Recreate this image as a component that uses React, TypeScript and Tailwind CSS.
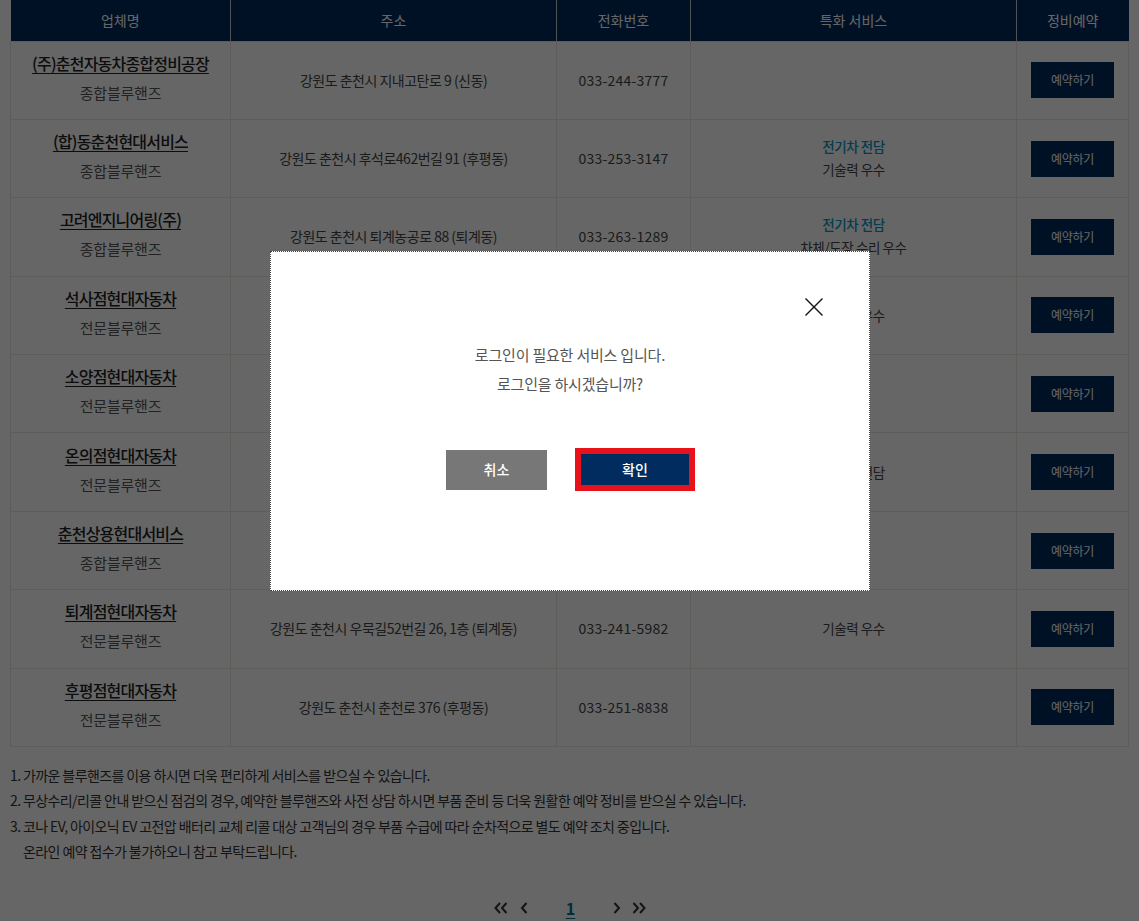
import React from "react";

type Row = {
  name: string;
  kind: string;
  addr: string;
  phone: string;
  ev?: string;
  svc?: string;
};

const rows: Row[] = [
  { name: "(주)춘천자동차종합정비공장", kind: "종합블루핸즈", addr: "강원도 춘천시 지내고탄로 9 (신동)", phone: "033-244-3777" },
  { name: "(합)동춘천현대서비스", kind: "종합블루핸즈", addr: "강원도 춘천시 후석로462번길 91 (후평동)", phone: "033-253-3147", ev: "전기차 전담", svc: "기술력 우수" },
  { name: "고려엔지니어링(주)", kind: "종합블루핸즈", addr: "강원도 춘천시 퇴계농공로 88 (퇴계동)", phone: "033-263-1289", ev: "전기차 전담", svc: "차체/도장 수리 우수" },
  { name: "석사점현대자동차", kind: "전문블루핸즈", addr: "강원도 춘천시 석사동 123", phone: "033-262-0000", svc: "기술력 우수" },
  { name: "소양점현대자동차", kind: "전문블루핸즈", addr: "강원도 춘천시 소양로 45", phone: "033-254-0000" },
  { name: "온의점현대자동차", kind: "전문블루핸즈", addr: "강원도 춘천시 온의동 67", phone: "033-256-0000", svc: "전기차 전담" },
  { name: "춘천상용현대서비스", kind: "종합블루핸즈", addr: "강원도 춘천시 영서로 100", phone: "033-261-0000" },
  { name: "퇴계점현대자동차", kind: "전문블루핸즈", addr: "강원도 춘천시 우묵길52번길 26, 1층 (퇴계동)", phone: "033-241-5982", svc: "기술력 우수" },
  { name: "후평점현대자동차", kind: "전문블루핸즈", addr: "강원도 춘천시 춘천로 376 (후평동)", phone: "033-251-8838" },
];

const font = { fontFamily: '"Noto Sans CJK KR", "Noto Sans", sans-serif' };

export default function App() {
  return (
    <div className="relative min-h-[921px] w-[1139px] bg-white text-[#333]" style={font}>
      <table className="ml-[10px] w-[1118px] table-fixed border-collapse">
        <colgroup>
          <col className="w-[220px]" />
          <col className="w-[326px]" />
          <col className="w-[134px]" />
          <col className="w-[326px]" />
          <col className="w-[112px]" />
        </colgroup>
        <thead>
          <tr className="h-[41px] bg-[#002c5f] text-[14px] text-white">
            <th className="border-r border-[#c9ccd2] font-normal">업체명</th>
            <th className="border-r border-[#c9ccd2] font-normal">주소</th>
            <th className="border-r border-[#c9ccd2] font-normal">전화번호</th>
            <th className="border-r border-[#c9ccd2] font-normal">특화 서비스</th>
            <th className="font-normal">정비예약</th>
          </tr>
        </thead>
        <tbody>
          {rows.map((r, i) => (
            <tr key={i} className="h-[78.4px] text-center">
              <td className="border border-[#ebe9df] pb-[2px] align-middle">
                <div className="-mt-[3px] text-[16px] leading-[22px] font-medium text-[#222] underline underline-offset-[3px] tracking-[-0.8px]">
                  {r.name}
                </div>
                <div className="mt-[8px] text-[15px] leading-[22px] text-[#555] tracking-[-0.2px]">{r.kind}</div>
              </td>
              <td className="border border-[#ebe9df] text-[14px] text-[#444] tracking-[-0.5px]">{r.addr}</td>
              <td className="border border-[#ebe9df] text-[14px] text-[#444] tracking-[0.2px]">{r.phone}</td>
              <td className="border border-[#ebe9df] text-[13.5px] tracking-[-0.4px]">
                {r.ev && <div className="-mt-[2px] leading-[23px] font-medium text-[#0b93c4]">{r.ev}</div>}
                {r.svc && <div className="leading-[23px] text-[#444]">{r.svc}</div>}
              </td>
              <td className="border border-[#ebe9df]">
                <button className="h-[36px] w-[83px] bg-[#002c5f] text-[12px] text-white tracking-[-0.3px]">예약하기</button>
              </td>
            </tr>
          ))}
        </tbody>
      </table>

      <ul className="mt-[16px] ml-[10px] flex flex-col text-[14px] leading-[25.4px] text-[#333] tracking-[-0.6px]">
        <li>1. 가까운 블루핸즈를 이용 하시면 더욱 편리하게 서비스를 받으실 수 있습니다.</li>
        <li>2. 무상수리/리콜 안내 받으신 점검의 경우, 예약한 블루핸즈와 사전 상담 하시면 부품 준비 등 더욱 원활한 예약 정비를 받으실 수 있습니다.</li>
        <li>
          3. 코나 EV, 아이오닉 EV 고전압 배터리 교체 리콜 대상 고객님의 경우 부품 수급에 따라 순차적으로 별도 예약 조치 중입니다.
          <br />
          <span className="pl-[13px]">온라인 예약 접수가 불가하오니 참고 부탁드립니다.</span>
        </li>
      </ul>

      <div className="mt-[33px] flex items-center justify-center gap-0 pl-[1px] text-[#333]">
        <svg width="14" height="12" viewBox="0 0 14 12" className="mr-[12px]" fill="none" stroke="#333" strokeWidth="2">
          <path d="M6 1 L1.5 6 L6 11 M12.5 1 L8 6 L12.5 11" />
        </svg>
        <svg width="8" height="12" viewBox="0 0 8 12" fill="none" stroke="#333" strokeWidth="2">
          <path d="M6.5 1 L2 6 L6.5 11" />
        </svg>
        <span className="mx-[38px] text-[16px] font-bold leading-[20px] text-[#0b6f8f] underline underline-offset-[3px]">1</span>
        <svg width="8" height="12" viewBox="0 0 8 12" fill="none" stroke="#333" strokeWidth="2">
          <path d="M1.5 1 L6 6 L1.5 11" />
        </svg>
        <svg width="14" height="12" viewBox="0 0 14 12" className="ml-[11px]" fill="none" stroke="#333" strokeWidth="2">
          <path d="M1.5 1 L6 6 L1.5 11 M8 1 L12.5 6 L8 11" />
        </svg>
      </div>

      {/* dim overlay */}
      <div className="fixed inset-0 bg-black/60" />

      {/* modal */}
      <div className="fixed left-[270px] top-[251px] h-[340px] w-[600px] bg-white outline-1 outline-dotted outline-[#444] -outline-offset-1">
        <button className="absolute right-[46px] top-[46px] h-[20px] w-[20px]" aria-label="닫기">
          <svg width="20" height="20" viewBox="0 0 20 20" fill="none" stroke="#111" strokeWidth="1.4">
            <path d="M1.5 1.5 L18.5 18.5 M18.5 1.5 L1.5 18.5" />
          </svg>
        </button>
        <div className="flex flex-col items-center pt-[90px] text-[15px] leading-[28.5px] text-[#555] tracking-[-0.2px]">
          <p>로그인이 필요한 서비스 입니다.</p>
          <p>로그인을 하시겠습니까?</p>
        </div>
        <div className="mt-[50px] flex items-center justify-center gap-[28px] pl-[1px]">
          <button className="h-[40px] w-[101px] bg-[#777] text-[14px] font-medium text-white">취소</button>
          <div className="border-[6px] border-[#e8121c] p-0">
            <button className="h-[31px] w-[108px] bg-[#002c5f] text-[14px] font-medium text-white">확인</button>
          </div>
        </div>
      </div>
    </div>
  );
}
